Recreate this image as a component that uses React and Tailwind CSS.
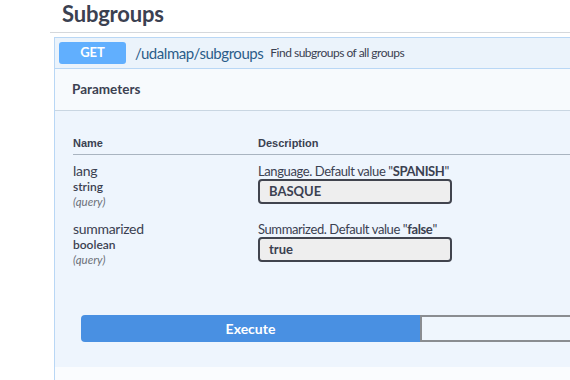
import React from 'react';

const params = [
  { name: 'lang', type: 'string', desc: 'Language. Default value ', def: 'SPANISH', value: 'BASQUE' },
  { name: 'summarized', type: 'boolean', desc: 'Summarized. Default value ', def: 'false', value: 'true' },
];

const App = () => {
  return (
    <div className="w-[570px] h-[380px] overflow-hidden bg-white font-['Lato',sans-serif] text-[#3b4151]">
      <div className="pl-[50px]">
        <h2 className="pl-[12px] h-[33px] text-[22px] font-bold leading-[28px] border-b border-[#d5d8dc] tracking-[-0.2px]">
          Subgroups
        </h2>
        <div className="mt-[4px] ml-[4px] border-l border-t border-[#b9d7f5] bg-[#eef5fd]">
          {/* header */}
          <div className="flex items-center h-[31px] pl-[4px] bg-[#ebf3fb] border-b border-[#b9d7f5]">
            <span className="w-[67px] h-[22px] rounded-[3px] bg-[#61affe] text-white text-[13px] font-bold flex items-center justify-center">
              GET
            </span>
            <span className="ml-[9px] text-[15px] text-[#2b5d8a] tracking-[-0.45px]">/udalmap/subgroups</span>
            <span className="ml-[7px] text-[12px] text-[#3b4151] tracking-[-0.5px]">Find subgroups of all groups</span>
          </div>
          {/* parameters header */}
          <div className="h-[42px] flex items-center pl-[17px] bg-[#f7fafd] border-b border-[#c9d6e2]">
            <span className="text-[13.5px] font-bold">Parameters</span>
          </div>
          {/* table */}
          <div className="pl-[18px] pt-[21px]">
            <div className="flex h-[23px] items-center border-b border-[#a9b4c0] text-[11px] font-bold font-['Liberation_Sans',sans-serif] text-[#3b4151]">
              <div className="w-[185px]">Name</div>
              <div>Description</div>
            </div>
            <div className="pt-[8px]">
              {params.map((p) => (
                <div key={p.name} className="flex h-[58px]">
                  <div className="w-[185px] flex flex-col">
                    <span className="text-[14px] leading-[16px] tracking-[-0.3px]">{p.name}</span>
                    <span className="text-[12px] font-semibold leading-[15px]">{p.type}</span>
                    <span className="text-[11.5px] italic text-[#6b6f78] leading-[15px]">(query)</span>
                  </div>
                  <div className="flex flex-col">
                    <span className="text-[13px] leading-[16px] tracking-[-0.4px]">
                      {p.desc}"<b>{p.def}</b>"
                    </span>
                    <div className="w-[194px] h-[25px] rounded-[4px] border-2 border-[#41444e] bg-[#eeeeee] flex items-center pl-[9px] text-[13px] font-bold">
                      {p.value}
                    </div>
                  </div>
                </div>
              ))}
            </div>
          </div>
          {/* execute */}
          <div className="pl-[26px] pt-[36px] pb-[25px] flex">
            <button className="w-[339px] h-[27px] bg-[#4990e2] rounded-l-[4px] text-white text-[14px] font-bold">
              Execute
            </button>
            <div className="flex-1 h-[27px] border-y-2 border-l-2 border-[#8a8d91] bg-[#eff6fd]"></div>
          </div>
          <div className="h-[20px] bg-[#fafcfe]"></div>
        </div>
      </div>
    </div>
  );
};

export default App;
